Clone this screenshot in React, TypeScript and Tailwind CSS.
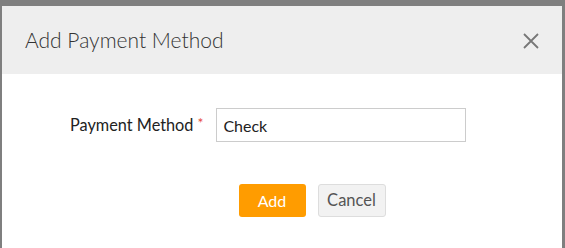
import React from "react";

export default function App() {
  return (
    <div className="w-[565px] h-[248px] bg-[#7f7f7f] pt-[6px] pl-[2px] pr-[3px] overflow-hidden" style={{ fontFamily: "Lato, 'Open Sans', sans-serif" }}>
      <div className="bg-white h-full">
        <div className="h-[68px] bg-[#eeeeee] flex items-center justify-between pl-[23px] pr-[22px]">
          <h2 className="text-[21px] font-light text-[#333333]">Add Payment Method</h2>
          <svg width="18" height="18" viewBox="0 0 18 18" className="mt-[1px]">
            <path d="M2 2 L16 16 M16 2 L2 16" stroke="#777777" strokeWidth="1.8" fill="none" />
          </svg>
        </div>
        <div className="flex items-center pt-[34px] pl-[68px]">
          <label className="text-[16.3px] text-[#222222]">
            Payment Method<span className="text-[#e74c3c] ml-[4px] text-[14px] relative top-[-3px]">*</span>
          </label>
          <input
            readOnly
            value="Check"
            className="ml-[13px] w-[250px] h-[34px] border border-[#cccccc] px-[6px] text-[16px] text-[#222222] outline-none"
            style={{ fontFamily: "Lato, sans-serif" }}
          />
        </div>
        <div className="flex justify-center gap-[12px] pt-[42px] pl-[60px]">
          <button className="w-[67px] h-[33px] bg-[#ff9c00] text-white text-[16px] rounded-[3px]">Add</button>
          <button className="w-[68px] h-[33px] bg-[#f2f2f2] border border-[#dddddd] text-[#555555] text-[16.5px] rounded-[3px]">Cancel</button>
        </div>
      </div>
    </div>
  );
}
